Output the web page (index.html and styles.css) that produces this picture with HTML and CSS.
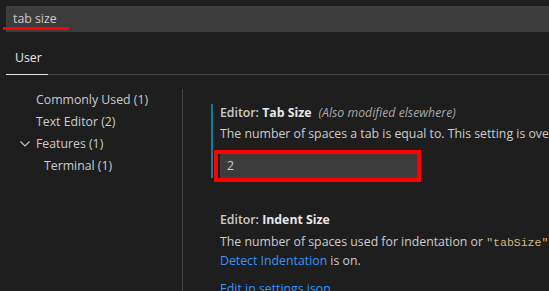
FILE: index.html
```html
<!DOCTYPE html>
<html>
<head>
<meta charset="utf-8">
<link rel="stylesheet" href="styles.css">
</head>
<body>
<div class="search"><span class="query">tab size</span><span class="mark"></span></div>
<div class="tabs"><div class="tab">User</div></div>
<div class="main">
  <div class="tree">
    <div class="row">Commonly Used (1)</div>
    <div class="row">Text Editor (2)</div>
    <div class="row"><svg class="chev" width="10" height="6" viewBox="0 0 10 6"><path d="M0.5 0.5 L5 5 L9.5 0.5" fill="none" stroke="#c5c5c5" stroke-width="1.1"/></svg>Features (1)</div>
    <div class="row sub">Terminal (1)</div>
  </div>
  <div class="content">
    <div class="item modified">
      <div class="title"><span class="cat">Editor: </span><span class="name">Tab Size</span><span class="also">(Also modified elsewhere)</span></div>
      <div class="desc">The number of spaces a tab is equal to. This setting is overridden based on the file contents when Editor: Detect Indentation is on.</div>
      <div class="hl"><div class="input">2</div></div>
    </div>
    <div class="item second">
      <div class="title"><span class="cat">Editor: </span><span class="name">Indent Size</span></div>
      <div class="desc">The number of spaces used for indentation or <code>"tabSize"</code> to use the value from<br><a class="link">Detect Indentation</a> is on.</div>
      <div class="edit"><a class="link">Edit in settings.json</a></div>
    </div>
  </div>
</div>
</body>
</html>
```
FILE: styles.css
```css
html, body {
  margin: 0;
  background: #1e1e1e;
  color: #cccccc;
  font-family: "Open Sans", "Noto Sans", sans-serif;
  font-size: 12.3px;
  overflow: hidden;
  width: 549px;
  height: 291px;
}
.search {
  position: relative;
  margin: 6px 0 0 6px;
  height: 26px;
  line-height: 26px;
  background: #3c3c3c;
  padding-left: 7px;
  color: #cccccc;
}
.mark {
  position: absolute;
  left: -3px;
  top: 21px;
  width: 66px;
  height: 3px;
  background: #ff0000;
}
.tabs {
  margin-left: 6px;
  height: 42px;
  border-bottom: 1px solid #444444;
  display: flex;
}
.tab {
  box-sizing: border-box;
  height: 43px;
  width: 42px;
  padding: 18px 0 0 9px;
  line-height: 16px;
  color: #e7e7e7;
  border-bottom: 1px solid #e7e7e7;
}
.main {
  display: flex;
  padding-top: 14px;
}
.tree {
  width: 182px;
  flex: none;
  border-right: 1px solid #444444;
  height: 220px;
}
.row {
  height: 22px;
  line-height: 22px;
  padding-left: 36px;
  white-space: nowrap;
  display: flex;
  align-items: center;
}
.row.sub { padding-left: 44px; }
.chev {
  margin-left: -16px;
  margin-right: 6px;
}
.content {
  padding-left: 28px;
  flex: 1;
  min-width: 0;
  white-space: nowrap;
}
.item {
  padding-left: 7px;
  border-left: 2px solid transparent;
}
.item.modified {
  margin-top: 15px;
  border-left-color: #0c7d9d;
}
.title {
  line-height: 18px;
  height: 18px;
}
.cat { color: #cccccc; font-weight: 600; }
.name { color: #e7e7e7; font-weight: 700; }
.also {
  font-style: italic;
  color: #a8a8a8;
  margin-left: 7px;
}
.desc {
  margin-top: 3px;
  line-height: 18px;
}
.hl {
  position: relative;
  margin-top: 11px;
  width: 197px;
}
.hl::after {
  content: "";
  position: absolute;
  left: -6px;
  top: -4px;
  right: -4px;
  bottom: -4px;
  border: 4px solid #ff0000;
}
.input {
  height: 24px;
  line-height: 24px;
  background: #3c3c3c;
  padding-left: 7px;
  color: #cccccc;
}
.item.second {
  margin-top: 33px;
}
.second .desc { margin-top: 4px; }
code {
  font-family: "Liberation Mono", monospace;
  font-size: 11.5px;
  color: #d7ba7d;
}
.link { color: #3794ff; }
.edit {
  margin-top: 10px;
  line-height: 18px;
}
```
